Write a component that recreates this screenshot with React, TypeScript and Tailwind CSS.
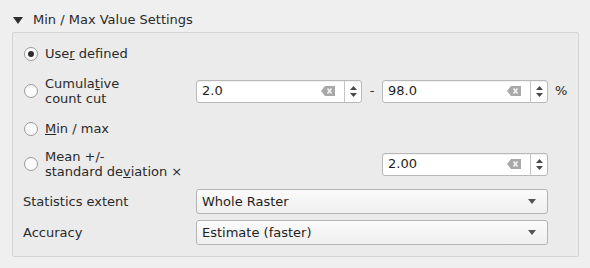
import React from "react";

const ClearIcon = () => (
  <svg width="14" height="10" viewBox="0 0 14 10" className="shrink-0">
    <path d="M4 0H14V10H4L0 5Z" fill="#a8a8a8" />
    <path d="M6.5 2.5L10.5 7.5M10.5 2.5L6.5 7.5" stroke="#f2f2f2" strokeWidth="1.6" />
  </svg>
);

const SpinArrows = () => (
  <div className="flex flex-col items-center justify-center w-[17px] h-full border-l border-[#c4c4c4] gap-[3px]">
    <svg width="7" height="4" viewBox="0 0 7 4">
      <path d="M0 4L3.5 0L7 4Z" fill="#4a4a4a" />
    </svg>
    <svg width="7" height="4" viewBox="0 0 7 4">
      <path d="M0 0L3.5 4L7 0Z" fill="#4a4a4a" />
    </svg>
  </div>
);

const SpinBox = ({ value }: { value: string }) => (
  <div className="flex items-center h-[23px] w-[166px] bg-white border border-[#b8b8b8] rounded-[3px] shadow-[inset_0_1px_1px_rgba(0,0,0,0.06)]">
    <span className="flex-1 pl-[5px] text-[#1e1e1e]">{value}</span>
    <div className="pr-[9px]">
      <ClearIcon />
    </div>
    <SpinArrows />
  </div>
);

const Radio = ({ checked }: { checked?: boolean }) => (
  <div className="w-[14px] h-[14px] rounded-full border border-[#9a9a9a] bg-[#fbfbfb] flex items-center justify-center shrink-0">
    {checked && <div className="w-[6px] h-[6px] rounded-full bg-[#2e2e2e]" />}
  </div>
);

const Combo = ({ value }: { value: string }) => (
  <div className="flex items-center h-[25px] w-[352px] border border-[#b4b4b4] rounded-[3px] bg-gradient-to-b from-[#fbfbfb] to-[#efefef] px-[5px]">
    <span className="flex-1 text-[#1e1e1e]">{value}</span>
    <svg width="8" height="5" viewBox="0 0 8 5" className="mr-[6px]">
      <path d="M0 0H8L4 5Z" fill="#555" />
    </svg>
  </div>
);

export default function App() {
  return (
    <div
      className="w-[590px] h-[268px] bg-[#efefef] text-[#2a2a2a] text-[13px] pt-[10px]"
      style={{ fontFamily: "'DejaVu Sans', sans-serif" }}
    >
      {/* Header */}
      <div className="flex items-center h-[20px] pl-[13px]">
        <svg width="10" height="7" viewBox="0 0 10 7" className="mr-[10px]">
          <path d="M0 0H10L5 7Z" fill="#2e2e2e" />
        </svg>
        <span>Min / Max Value Settings</span>
      </div>

      {/* Group box */}
      <div className="ml-[12px] mr-[11px] mt-[2px] h-[225px] border border-[#d4d4d4] rounded-[2px] bg-[#ebebeb] pl-[10px] pt-[10px]">
        <div className="flex items-center gap-[7px] h-[22px] pl-[1px]">
          <Radio checked />
          <span>
            Use<span className="underline">r</span> defined
          </span>
        </div>

        <div className="flex items-center h-[36px] mt-[8px]">
          <div className="flex items-center gap-[7px] w-[173px] pl-[1px]">
            <Radio />
            <span className="leading-[15px]">
              Cumula<span className="underline">t</span>ive
              <br />
              count cut
            </span>
          </div>
          <SpinBox value="2.0" />
          <span className="w-[20px] text-center">-</span>
          <SpinBox value="98.0" />
          <span className="ml-[7px]">%</span>
        </div>

        <div className="flex items-center gap-[7px] h-[22px] mt-[9px] pl-[1px]">
          <Radio />
          <span>
            <span className="underline">M</span>in / max
          </span>
        </div>

        <div className="flex items-center h-[36px] mt-[6px]">
          <div className="flex items-center gap-[7px] w-[359px] pl-[1px]">
            <Radio />
            <span className="leading-[15px]">
              Mean +/-
              <br />
              standard de<span className="underline">v</span>iation ×
            </span>
          </div>
          <SpinBox value="2.00" />
        </div>

        <div className="flex items-center h-[25px] mt-[7px]">
          <span className="w-[173px]">Statistics extent</span>
          <Combo value="Whole Raster" />
        </div>

        <div className="flex items-center h-[25px] mt-[6px]">
          <span className="w-[173px]">Accuracy</span>
          <Combo value="Estimate (faster)" />
        </div>
      </div>
    </div>
  );
}
